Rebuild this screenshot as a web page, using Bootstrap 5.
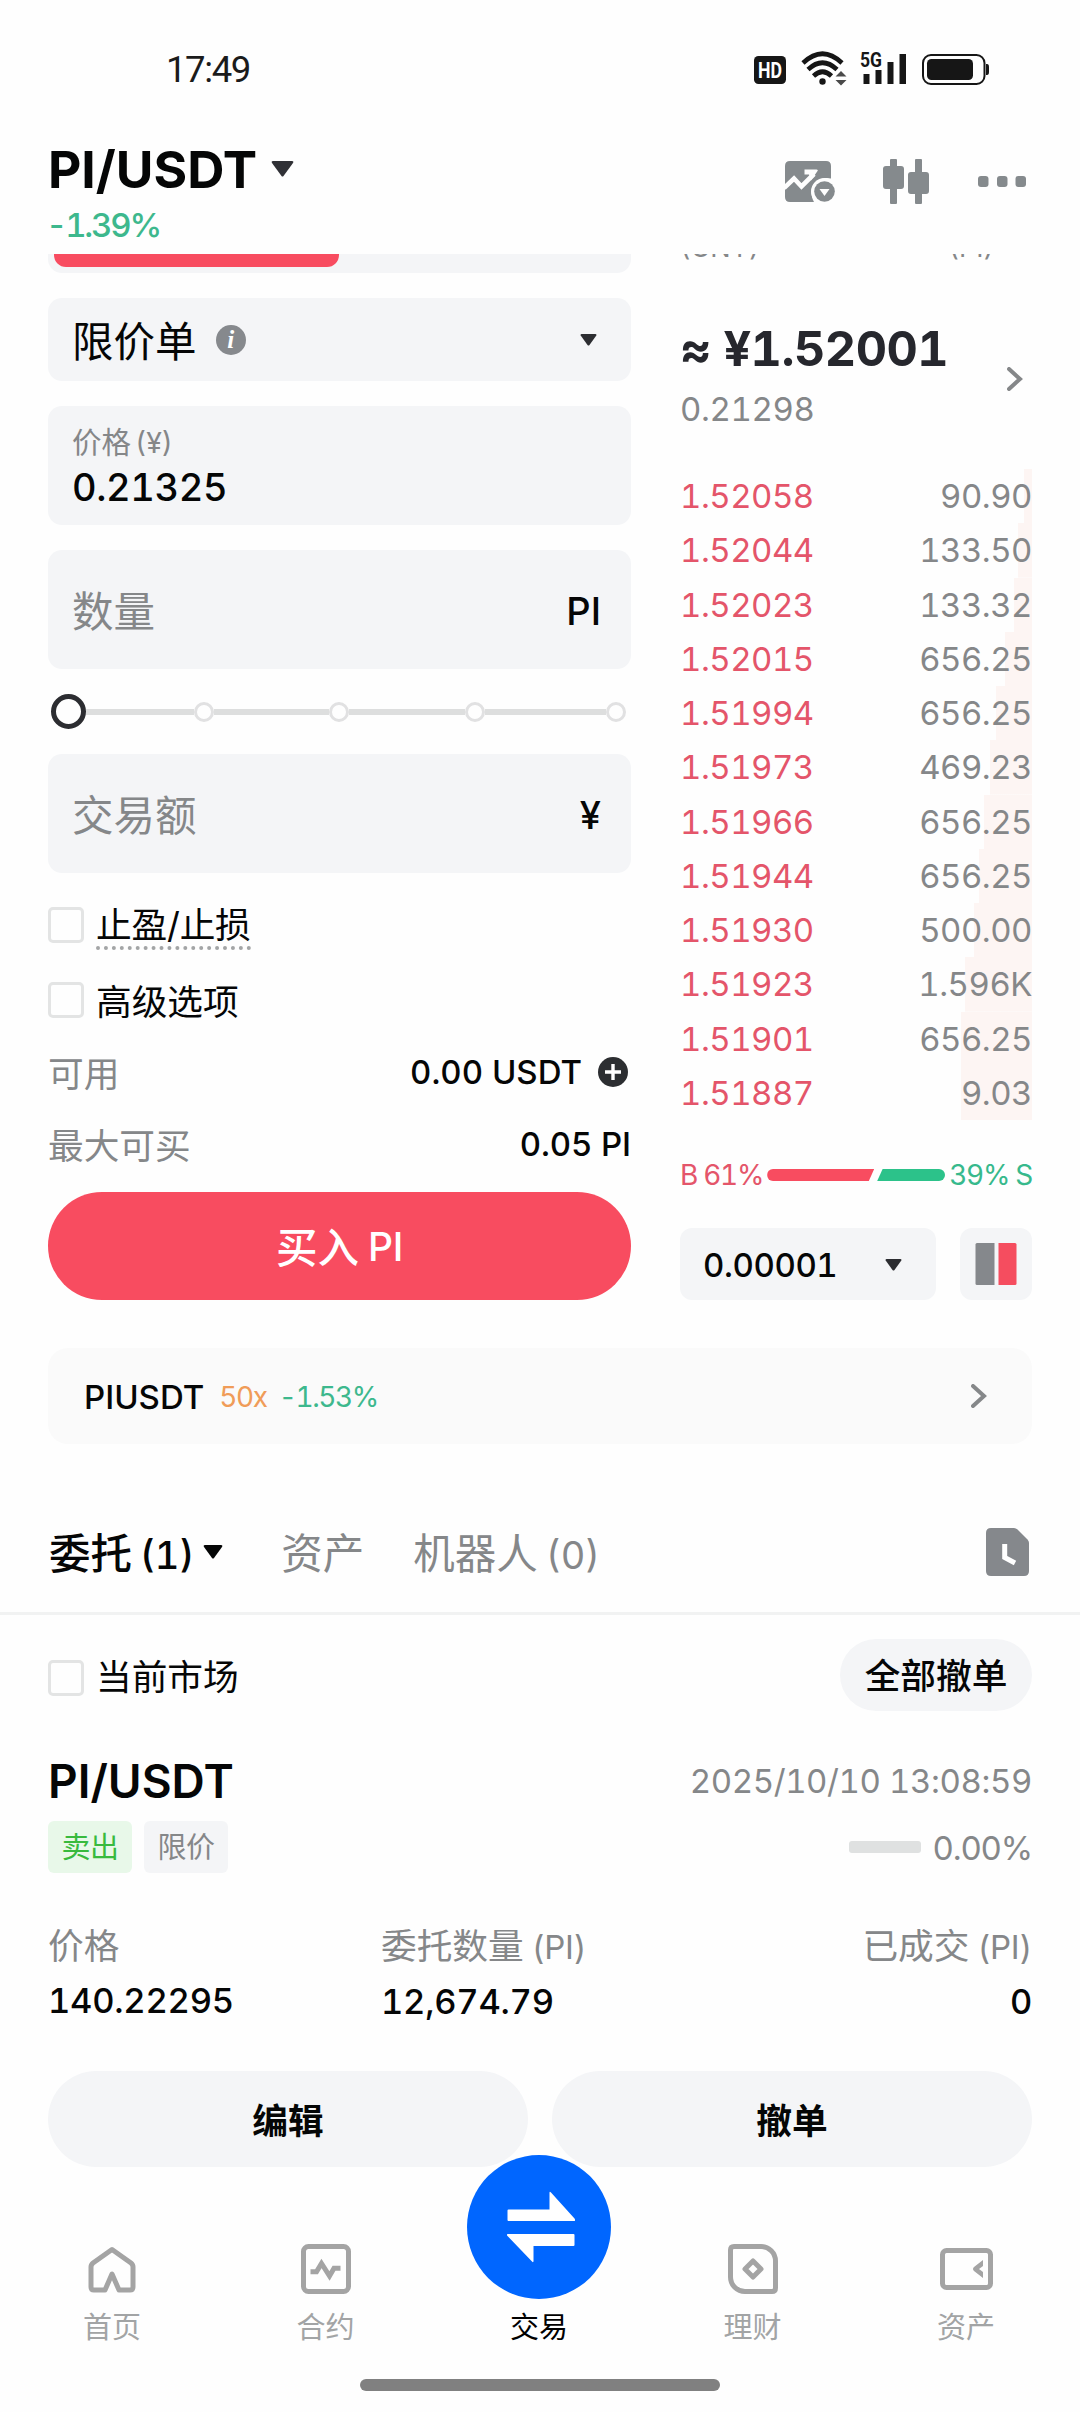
<!DOCTYPE html>
<html lang="zh-CN">
<head>
<meta charset="utf-8">
<meta name="viewport" content="width=device-width, initial-scale=1">
<title>PI/USDT</title>
<link href="https://cdn.jsdelivr.net/npm/bootstrap@5.3.0/dist/css/bootstrap.min.css" rel="stylesheet">
<style>
:root{--ink:#050606;--dim:#858789;--soft:#f4f5f7;--buy:#f84c60;--up:#2cc088}
body{width:1080px;height:2412px;overflow:hidden;background:#fefefe;color:var(--ink);font-family:Inter,"Noto Sans CJK SC",sans-serif;font-feature-settings:"tnum";font-size:33px;line-height:40px;letter-spacing:-.4px}
svg{display:block;flex:none}
.status{height:140px;padding:49px 90px 0 166px}
.clock{font-family:Roboto,sans-serif;font-size:36.5px;line-height:42px;letter-spacing:-1.4px;color:#1b1b1b;font-feature-settings:normal}
.head-bar{height:114px;padding:0 54px 0 48px}
.pair-name{font-size:51.5px;font-weight:700;line-height:58px;font-feature-settings:normal;letter-spacing:0}
.chg{color:#3db88d;font-weight:500;line-height:38px;letter-spacing:-2.2px;margin-left:-2px}
.scroller{height:1916px;overflow:hidden}
.dim{color:var(--dim)}
.form-col{width:583px}
.book-col{width:352px}
.side-switch{height:19px;background:var(--soft);border-radius:0 0 14px 14px;padding:0 6px}
.side-on{height:13px;width:285px;background:var(--buy);border-radius:0 0 12px 12px}
.field{background:var(--soft);border-radius:14px;padding:0 30px 0 24px}
.field-lg{height:119px;margin-top:25px}
.t41{font-size:41.5px;line-height:50px;letter-spacing:0}
.t38{font-size:38px;font-weight:500}
.t36{font-size:35.7px;letter-spacing:0}
.mid{font-weight:500}
.wide{letter-spacing:0}
.cjk{position:relative;top:2px}
.low{padding-top:2px}
.slider-row{height:35px;padding:0 5px 0 3px}
.knob{width:35px;height:35px;border:5px solid #2c2d31;border-radius:50%;flex:none}
.stop{width:20px;height:20px;border:3px solid #e1e1e2;border-radius:50%;flex:none}
.seg{height:6px;background:#dddede;flex-basis:0}
.tick{width:36px;height:36px;border:3.5px solid #e3e4e4;border-radius:5px;flex:none;margin-right:12px}
.dotted{line-height:42px;border-bottom:4px dotted #a3a5a6;margin-top:-3px;letter-spacing:-.2px}
.buy-btn{height:108px;background:var(--buy);color:#fff;border-radius:54px;font-size:39px;font-weight:500}
.book-head{font-size:27px;line-height:27px;letter-spacing:0;margin-top:-20px;padding-right:38px}
.last{font-size:48.5px;font-weight:700;color:#26272d;line-height:60px;white-space:pre;letter-spacing:-.5px}
.ask{height:54.25px;color:#e4556a;letter-spacing:-.5px;background:linear-gradient(#fdf5f3,#fdf5f3) right/var(--d) 100% no-repeat}
.bs-share{font-size:28px;line-height:30px;height:30px;letter-spacing:-1.3px}
.bar-b{width:107px;height:12px;background:var(--buy);border-radius:6px 0 0 6px;clip-path:polygon(0 0,100% 0,95% 100%,0 100%)}
.bar-s{width:68px;height:12px;background:#2cc28a;border-radius:0 6px 6px 0;clip-path:polygon(8% 0,100% 0,100% 100%,0 100%)}
.step-box{width:256px;height:72px;background:var(--soft);border-radius:12px;padding:0 34px 0 23px}
.mode-box{width:72px;height:72px;background:var(--soft);border-radius:12px}
.perp{height:96px;background:#fafafa;border-radius:20px;padding:0 45px 0 36px}
.perp .sub{font-size:28px;letter-spacing:-1.4px}
.tab-row{height:128px;border-bottom:3px solid #f1f2f2;padding:5px 51px 0 49px}
.paren{margin-left:8px;font-size:38px}
.paren-sm{margin-left:8px;font-size:33px;letter-spacing:-.3px}
.pill{background:var(--soft);border-radius:54px}
.tag-sm{height:52px;width:84px;border-radius:6px;font-size:29px;padding-top:2px}
.fill-track{width:72px;height:12px;border-radius:3px;background:#dfe1e1}
.val{font-size:34.5px;font-weight:500;margin-top:12px;letter-spacing:-.25px}
.tabbar{height:242px;background:#fefefe}
.tab-it{width:213.5px;color:#a2a4a5;font-size:29px;line-height:34px;letter-spacing:0}
.tab-it>svg{margin-bottom:17px}
.swap{width:144px;height:144px;margin-top:-15px;background:#06f;border-radius:50%;padding-left:4px}
.gesture{width:360px;height:12px;border-radius:6px;background:#808080;margin-top:34px}
</style>
</head>
<body class="m-0">
<header>
  <div class="status d-flex justify-content-between">
    <span class="clock">17:49</span>
    <svg width="236" height="44" viewBox="754 47 236 44" style="margin-top:-2px">
      <rect x="754" y="56" width="32" height="28" rx="4.500" fill="#161616"/>
      <text x="770" y="78" text-anchor="middle" font-family="Roboto,sans-serif" font-size="22.500" font-weight="700" fill="#fff" textLength="24" lengthAdjust="spacingAndGlyphs" letter-spacing="0">HD</text>
      <g fill="none" stroke="#161616" stroke-width="4.600"><path d="M803 63Q822.500 44.500 842 63"/><path d="M808 69.500Q822.500 56 837 69.500"/><path d="M813.500 76Q822.500 67.500 831.500 76"/></g>
      <circle cx="822.500" cy="81.500" r="3.200" fill="#161616"/>
      <path d="M841 71l5.500 5.500h-11zM841 85.500l5.500-5.500h-11z" fill="#4a4a4a"/>
      <text x="860" y="67" font-family="Roboto,sans-serif" font-size="19.500" font-weight="700" fill="#161616" textLength="22" lengthAdjust="spacingAndGlyphs" letter-spacing="0">5G</text>
      <path d="M863.500 74h6v10h-6zM875.500 70h6v14h-6zM887.500 62h6v22h-6zM899.500 54h6.500v30h-6.500z" fill="#161616"/>
      <rect x="923" y="55" width="61.500" height="29" rx="8" fill="none" stroke="#161616" stroke-width="2"/>
      <rect x="927" y="59" width="46" height="21" rx="4.500" fill="#161616"/>
      <path d="M986 64h1a2 3 0 0 1 2 3v5a2 3 0 0 1-2 3h-1z" fill="#161616"/>
    </svg>
  </div>
  <div class="head-bar d-flex justify-content-between align-items-start">
    <div class="d-flex flex-column">
      <div class="d-flex align-items-center"><span class="pair-name">PI/USDT</span>
        <svg style="margin-left:14px" width="23" height="16" viewBox="0 0 23 16"><path d="M2 0h19q2 0 1 2L12.500 15q-1 1-2 0L1 2Q0 0 2 0z" fill="#303136"/></svg></div>
      <div class="chg mt-2">-1.39%</div>
    </div>
    <svg width="241" height="46" viewBox="785 159 241 46" style="margin-top:19px" fill="#858a8d">
      <path d="M790 161h36q5 0 5 5v12.500q-3-.8-5.500-.5c-8 .8-14 6.500-14 14 0 4 .9 7 2.500 10H790q-5 0-5-5V166q0-5 5-5z"/>
      <path d="M784 188l10-9.500 7.500 8L814 174" fill="none" stroke="#fefefe" stroke-width="4.600"/><path d="M804.500 169.500h12q2 0 1 1.500l-6.500 9.500-2-6h-4.500z" fill="#fefefe"/>
      <circle cx="824.500" cy="191.500" r="13.500" fill="#fefefe"/><circle cx="824.500" cy="191.500" r="10.300"/><path d="M819.500 189h10l-5 7z" fill="#fefefe"/>
      <path d="M890 160q0-1 1-1h5q1 0 1 1v6h4q3 0 3 3v17q0 3-3 3h-4v14q0 1-1 1h-5q-1 0-1-1v-14h-4q-3 0-3-3v-17q0-3 3-3h4zM915 160q0-1 1-1h5q1 0 1 1v12h4q3 0 3 3v16q0 3-3 3h-4v9q0 1-1 1h-5q-1 0-1-1v-9h-4q-3 0-3-3v-16q0-3 3-3h4z"/>
      <rect x="978" y="176" width="10.500" height="11" rx="3"/><rect x="997" y="176" width="10.500" height="11" rx="3"/><rect x="1015.500" y="176" width="10.500" height="11" rx="3"/>
    </svg>
  </div>
</header>

<main class="scroller">
  <div class="d-flex justify-content-between px-5">
    <section class="form-col d-flex flex-column">
      <div class="side-switch"><div class="side-on"></div></div>
      <div class="field d-flex align-items-center" style="height:83px;margin-top:25px;padding-right:34px">
        <span class="t41 cjk">限价单</span>
        <svg style="margin-left:19px" width="30" height="30" viewBox="0 0 30 30"><circle cx="15" cy="15" r="15" fill="#86898d"/><text x="14.500" y="23" text-anchor="middle" font-family="Liberation Serif,serif" font-style="italic" font-weight="700" font-size="25" fill="#fff">i</text></svg>
        <svg class="ms-auto" width="17" height="12" viewBox="0 0 17 12"><path d="M1.500 0h14q1.500 0 .8 1.500L9.500 11q-1 1-2 0L.7 1.500Q0 0 1.500 0z" fill="#2c2d31"/></svg>
      </div>
      <div class="field field-lg d-flex flex-column justify-content-center">
        <span class="dim wide" style="font-size:29.500px;line-height:42px">价格<span style="margin-left:4px;font-size:28.500px">(¥)</span></span>
        <span class="t38" style="line-height:46px">0.21325</span>
      </div>
      <div class="field field-lg d-flex align-items-center justify-content-between"><span class="t41 cjk dim">数量</span><span class="t38 low wide">PI</span></div>
      <div class="slider-row d-flex align-items-center" style="margin-top:25px">
        <i class="knob"></i><i class="seg" style="flex-grow:108"></i><i class="stop"></i><i class="seg" style="flex-grow:115"></i><i class="stop"></i><i class="seg" style="flex-grow:116"></i><i class="stop"></i><i class="seg" style="flex-grow:121"></i><i class="stop"></i>
      </div>
      <div class="field field-lg d-flex align-items-center justify-content-between"><span class="t41 cjk dim">交易额</span><span class="t38 low wide">¥</span></div>
      <div class="d-flex align-items-start" style="margin-top:34px;height:75px"><i class="tick"></i><span class="t36 dotted">止盈/止损</span></div>
      <div class="d-flex align-items-center" style="height:36px"><i class="tick"></i><span class="t36 cjk">高级选项</span></div>
      <div class="d-flex align-items-center justify-content-between" style="margin-top:34px;height:40px;padding-right:3px"><span class="t36 cjk dim">可用</span>
        <span class="d-flex align-items-center mid wide">0.00 USDT
        <svg class="ms-3" width="30" height="30" viewBox="0 0 30 30"><circle cx="15" cy="15" r="15" fill="#2c2e31"/><path d="M15 7v16M7 15h16" stroke="#fff" stroke-width="3.400"/></svg></span></div>
      <div class="d-flex align-items-center justify-content-between" style="margin-top:32px;height:40px"><span class="t36 cjk dim">最大可买</span><span class="mid" style="letter-spacing:-.1px">0.05 PI</span></div>
      <div class="buy-btn d-flex align-items-center justify-content-center" style="margin-top:28px"><span class="t41 cjk">买入</span><span class="low" style="margin-left:9px">PI</span></div>
    </section>

    <section class="book-col d-flex flex-column">
      <div class="book-head dim d-flex justify-content-between"><span>(CNY)</span><span>(PI)</span></div>
      <div class="d-flex align-items-center justify-content-between" style="margin-top:58px;padding-right:9px">
        <div><div class="last">≈ ¥1.52001</div><div class="dim" style="margin-top:10px">0.21298</div></div>
        <svg style="margin-top:10px" width="16" height="24" viewBox="0 0 16 24"><path d="M2 2l11 10L2 22" fill="none" stroke="#858789" stroke-width="4" stroke-linecap="round"/></svg>
      </div>
      <div style="margin-top:40px">
        <div class="ask d-flex align-items-center justify-content-between" style="--d:8px"><span>1.52058</span><span class="dim">90.90</span></div>
        <div class="ask d-flex align-items-center justify-content-between" style="--d:14px"><span>1.52044</span><span class="dim">133.50</span></div>
        <div class="ask d-flex align-items-center justify-content-between" style="--d:18px"><span>1.52023</span><span class="dim">133.32</span></div>
        <div class="ask d-flex align-items-center justify-content-between" style="--d:27px"><span>1.52015</span><span class="dim">656.25</span></div>
        <div class="ask d-flex align-items-center justify-content-between" style="--d:36px"><span>1.51994</span><span class="dim">656.25</span></div>
        <div class="ask d-flex align-items-center justify-content-between" style="--d:42px"><span>1.51973</span><span class="dim">469.23</span></div>
        <div class="ask d-flex align-items-center justify-content-between" style="--d:48px"><span>1.51966</span><span class="dim">656.25</span></div>
        <div class="ask d-flex align-items-center justify-content-between" style="--d:53px"><span>1.51944</span><span class="dim">656.25</span></div>
        <div class="ask d-flex align-items-center justify-content-between" style="--d:58px"><span>1.51930</span><span class="dim">500.00</span></div>
        <div class="ask d-flex align-items-center justify-content-between" style="--d:67px"><span>1.51923</span><span class="dim">1.596K</span></div>
        <div class="ask d-flex align-items-center justify-content-between" style="--d:71px"><span>1.51901</span><span class="dim">656.25</span></div>
        <div class="ask d-flex align-items-center justify-content-between" style="--d:71px"><span>1.51887</span><span class="dim">9.03</span></div>
      </div>
      <div class="bs-share d-flex align-items-center justify-content-between" style="margin-top:40px">
        <span style="color:#e4556a">B 61%</span>
        <span class="d-flex" style="gap:3px"><i class="bar-b"></i><i class="bar-s"></i></span>
        <span style="color:#37b98c">39% S</span>
      </div>
      <div class="d-flex justify-content-between" style="margin-top:38px">
        <div class="step-box d-flex align-items-center justify-content-between mid"><span class="low">0.00001</span>
          <svg width="17" height="12" viewBox="0 0 17 12" style="margin-top:2px"><path d="M1.500 0h14q1.500 0 .8 1.500L9.500 11q-1 1-2 0L.7 1.500Q0 0 1.500 0z" fill="#2c2d31"/></svg></div>
        <div class="mode-box d-flex align-items-center justify-content-center"><svg width="42" height="42" viewBox="0 0 42 42"><path d="M2 0h17.500v42H2q-1.500 0-1.500-1.500v-39Q.5 0 2 0z" fill="#85888c"/><path d="M23.500 0H40q1.500 0 1.500 1.500v39Q41.500 42 40 42H23.500z" fill="#f54d5f"/></svg></div>
      </div>
    </section>
  </div>

  <div class="px-5" style="margin-top:48px">
    <div class="perp d-flex align-items-center"><span class="mid low wide">PIUSDT</span><span class="sub low" style="margin-left:15px;color:#f09c58">50x</span><span class="sub low" style="margin-left:12px;color:#3db88d">-1.53%</span>
      <svg class="ms-auto" width="16" height="24" viewBox="0 0 16 24"><path d="M2 2l11 10L2 22" fill="none" stroke="#858789" stroke-width="4" stroke-linecap="round"/></svg></div>
  </div>

  <nav class="tab-row d-flex align-items-center" style="margin-top:43px">
    <span class="t41 cjk mid">委托<span class="paren">(1)</span></span>
    <svg style="margin-left:9px" width="20" height="14" viewBox="0 0 20 14"><path d="M2 0h16q2 0 1 2l-8 11q-1 1-2 0L1 2Q0 0 2 0z" fill="#050606"/></svg>
    <span class="t41 cjk dim" style="margin-left:58px">资产</span>
    <span class="t41 cjk dim" style="margin-left:49px">机器人<span class="paren">(0)</span></span>
    <svg class="ms-auto" width="43" height="48" viewBox="0 0 43 48"><path d="M5 0h23q2 0 3.500 1.500l10 10Q43 13 43 15v28q0 5-5 5H5q-5 0-5-5V5q0-5 5-5z" fill="#85888c"/><path d="M18.700 16v13.500L29 35" fill="none" stroke="#fff" stroke-width="5"/></svg>
  </nav>

  <section class="px-5">
    <div class="d-flex align-items-center justify-content-between" style="margin-top:24px;height:72px">
      <div class="d-flex align-items-center" style="padding-top:5px"><i class="tick"></i><span class="t36" style="margin-top:-2px">当前市场</span></div>
      <div class="pill t36 mid low d-flex align-items-center justify-content-center" style="width:192px;height:72px">全部撤单</div>
    </div>
    <div class="d-flex align-items-center justify-content-between" style="margin-top:42px;height:56px"><span class="wide" style="font-size:46px;font-weight:600;font-feature-settings:normal">PI/USDT</span><span class="dim">2025/10/10 13:08:59</span></div>
    <div class="d-flex align-items-center" style="margin-top:12px;gap:12px">
      <span class="tag-sm d-flex align-items-center justify-content-center" style="background:#e8f8e9;color:#38ba3e">卖出</span>
      <span class="tag-sm dim d-flex align-items-center justify-content-center" style="background:var(--soft)">限价</span>
      <i class="fill-track ms-auto"></i><span class="dim low" style="letter-spacing:-1.2px">0.00%</span>
    </div>
    <div class="row g-0" style="margin-top:50px">
      <div style="width:333px"><div class="t36 dim" style="line-height:46px">价格</div><div class="val">140.22295</div></div>
      <div class="col"><div class="t36 dim" style="line-height:46px">委托数量<span class="paren-sm">(PI)</span></div><div class="val">12,674.79</div></div>
      <div class="col text-end"><div class="t36 dim" style="line-height:46px">已成交<span class="paren-sm">(PI)</span></div><div class="val">0</div></div>
    </div>
    <div class="d-flex" style="margin-top:49px;gap:24px;height:96px">
      <div class="pill t36 flex-fill d-flex align-items-center justify-content-center" style="font-weight:700;padding-top:3px">编辑</div>
      <div class="pill t36 flex-fill d-flex align-items-center justify-content-center" style="font-weight:700;padding-top:3px">撤单</div>
    </div>
  </section>
</main>

<footer class="tabbar d-flex flex-column align-items-center position-relative">
  <div class="d-flex justify-content-center w-100" style="height:175px;padding-right:2px">
    <div class="tab-it d-flex flex-column align-items-center justify-content-end"><svg width="50" height="50" viewBox="0 0 50 50" fill="none" stroke="#a4a4a4" stroke-width="5" stroke-linejoin="round"><path d="M25 5.500L44 19q2 1.500 2 4v20q0 3-3 3H32L25 30l-7 16H7q-3 0-3-3V23q0-2.500 2-4z"/></svg><span>首页</span></div>
    <div class="tab-it d-flex flex-column align-items-center justify-content-end"><svg width="50" height="50" viewBox="0 0 50 50" fill="none" stroke="#a4a4a4" stroke-width="5"><rect x="2.500" y="2.500" width="45" height="45" rx="5"/><path d="M9.500 27.800h6L20.500 19.500l8 12.500 4.500-7.800h6.500" stroke-width="5"/></svg><span>合约</span></div>
    <div class="tab-it d-flex flex-column align-items-center justify-content-between"><div class="swap d-flex align-items-center justify-content-center flex-shrink-0"><svg width="68" height="72" viewBox="0 0 68 72" fill="#fff"><path d="M1.500 18.500h41V2q0-2 1.500-.5L67.500 27.500Q69 30 67 30H1.500q-1 0-1-1v-9.500q0-1 1-1zM66.500 55h-40v15q0 2-1.500.5L.5 45q-1.500-2 .5-2h65.500q1 0 1 1v10q0 1-1 1z"/></svg></div><span class="text-black">交易</span></div>
    <div class="tab-it d-flex flex-column align-items-center justify-content-end"><svg width="50" height="50" viewBox="0 0 50 50" fill="none" stroke="#a4a4a4" stroke-width="5"><path d="M6 2.500h27A14.500 14.500 0 0 1 47.500 17v27q0 3.500-3.500 3.500H17A14.500 14.500 0 0 1 2.500 33V6q0-3.500 3.500-3.500z"/><path d="M25 17l8 8-8 8-8-8z" stroke-linejoin="round"/></svg><span>理财</span></div>
    <div class="tab-it d-flex flex-column align-items-center justify-content-end"><svg width="53" height="50" viewBox="0 0 53 50" fill="none" stroke="#a4a4a4" stroke-width="5"><rect x="2.500" y="6.500" width="48" height="37" rx="4"/><path d="M43 16v6l-4 3 4 3v6l-9-7q-2-2 0-4z" fill="#a4a4a4" stroke="none"/></svg><span>资产</span></div>
  </div>
  <i class="gesture"></i>
</footer>
<script src="https://cdn.jsdelivr.net/npm/bootstrap@5.3.0/dist/js/bootstrap.bundle.min.js"></script>
</body>
</html>
